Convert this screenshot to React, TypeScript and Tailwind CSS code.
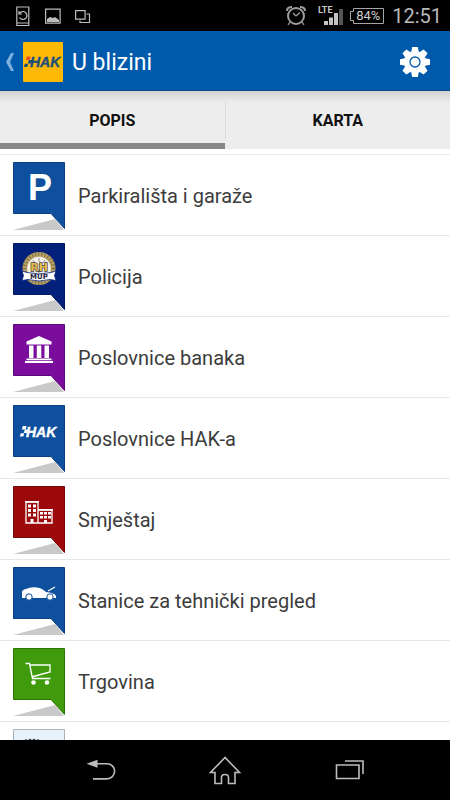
import type { ReactNode } from "react";

interface Place {
  name: string;
  fill: string;
  edge: string;
  art: ReactNode;
}

function HakMark({ x, y, color, accent }: { x: number; y: number; color: string; accent: string }) {
  return (
    <g transform={`translate(${x} ${y})`} fill={color}>
      <path d="M2.800 0h3.800l-1 3.400h-3.800z" fill={accent} />
      <path d="M4.800 3.600h3.500l-1 3.400h-3.500z" />
      <path d="M.8 7.200h3.500l-1 3.400h-3.500z" />
      <text
        x="6"
        y="10.500"
        fontFamily="Liberation Sans, Arial, sans-serif"
        fontSize="14"
        fontWeight="700"
        fontStyle="italic"
        stroke={color}
        strokeWidth=".4"
      >
        HAK
      </text>
    </g>
  );
}

const PLACES: Place[] = [
  {
    name: "Parkirališta i garaže",
    fill: "#0e509d",
    edge: "#0a3f80",
    art: (
      <text x="27" y="38" textAnchor="middle" fontFamily="Liberation Sans, Arial, sans-serif" fontSize="36" fontWeight="700" fill="#fff">
        P
      </text>
    ),
  },
  {
    name: "Policija",
    fill: "#02207a",
    edge: "#011860",
    art: (
      <g>
        <circle cx="26" cy="25.500" r="14" fill="#8f7c4a" stroke="#b7a266" strokeWidth="5" />
        <circle cx="26" cy="25.500" r="14.500" fill="none" stroke="#7d6c40" strokeWidth="4" strokeDasharray="1 2.200" />
        <circle cx="26" cy="25.500" r="11.800" fill="#f4f2ea" />
        <path d="M20 17l2 3M26 15v4M32 17l-2 3M26 27v3" stroke="#8b8b8b" />
        <path d="M9 28l5 1.500q12 3 24 0l5-1.500-1.500 4.500 1.500 5-6-1q-11 3-22 0l-6 1 1.500-5z" fill="#fff" stroke="#02207a" strokeWidth=".8" />
        <text
          x="26"
          y="28"
          textAnchor="middle"
          fontFamily="DejaVu Sans, sans-serif"
          fontSize="11"
          fontWeight="700"
          fill="#e9bd4c"
          stroke="#3b3a3a"
          strokeWidth="1.300"
          paintOrder="stroke"
        >
          RH
        </text>
        <text x="26" y="36" textAnchor="middle" fontFamily="DejaVu Sans, sans-serif" fontSize="7" fontWeight="700" fill="#1d2340">
          MUP
        </text>
      </g>
    ),
  },
  {
    name: "Poslovnice banaka",
    fill: "#7a0d9c",
    edge: "#5d0879",
    art: (
      <g fill="#fff">
        <path d="M26 12l12.500 5.500v3h-25v-3z" />
        <path d="M16 21.500h4.500v12.500h-4.500zM23.800 21.500h4.500v12.500h-4.500zM31.500 21.500h4.500v12.500h-4.500z" />
        <path d="M13.500 34.500h25v1.800h-25zM12 37h28v2h-28z" />
      </g>
    ),
  },
  {
    name: "Poslovnice HAK-a",
    fill: "#0e509d",
    edge: "#0a3f80",
    art: <HakMark x={7} y={21} color="#fff" accent="#fff" />,
  },
  {
    name: "Smještaj",
    fill: "#9c0a0c",
    edge: "#740506",
    art: (
      <g>
        <path d="M13 16h12v21h-12zM25 24h14v13h-14z" fill="none" stroke="#fff" strokeWidth="1.300" />
        <path d="M12 15h14v1.500h-14zM25 23h15v1.500h-15z" fill="#fff" />
        <path
          d="M15 18.500h3v3h-3zM20 18.500h3v3h-3zM15 23h3v3h-3zM20 23h3v3h-3zM15 27.500h3v3h-3zM20 27.500h3v3h-3zM27 26h3v2.500h-3zM31 26h3v2.500h-3zM35 26h3v2.500h-3zM27 30h3v2.500h-3zM31 30h3v2.500h-3zM35 30h3v2.500h-3zM17.500 33h3v4h-3zM31 34h3v3h-3z"
          fill="#fff"
        />
      </g>
    ),
  },
  {
    name: "Stanice za tehnički pregled",
    fill: "#0e509d",
    edge: "#0a3f80",
    art: (
      <g>
        <path d="M9 31v-6q0-2 4-3 5-2.500 11-1.500 5 .5 9 4.500 5 0 9 2.500 1.500 1.500 1 3.500z" fill="#fff" />
        <path d="M35 24l7-4" stroke="#fff" strokeWidth="1.300" />
        <g fill="#fff" stroke="#0e509d" strokeWidth="1">
          <circle cx="16" cy="30" r="3.200" />
          <circle cx="37" cy="30" r="3.200" />
        </g>
      </g>
    ),
  },
  {
    name: "Trgovina",
    fill: "#3f9b0b",
    edge: "#2d7605",
    art: (
      <g>
        <path d="M12.500 15.500h4l3 15h18M17 17h20v7l-18.500 5" fill="none" stroke="#fff" strokeWidth="1.300" />
        <g fill="#fff">
          <circle cx="20.500" cy="34.500" r="2.300" />
          <circle cx="34" cy="34.500" r="2.300" />
        </g>
      </g>
    ),
  },
];

function Pin({ fill, edge, children }: { fill: string; edge: string; children?: ReactNode }) {
  return (
    <svg width="52" height="68" viewBox="0 0 52 68" className="shrink-0" aria-hidden="true">
      <path d="M0 68L42 57l9 11z" fill="#c9c9c9" />
      <path d="M.5.5h51v66L38 51.500H.5z" fill={fill} stroke={edge} />
      {children}
    </svg>
  );
}

function StatusBar() {
  return (
    <div className="flex h-[31px] shrink-0 items-center bg-black px-4 text-[#b9b9b9]">
      <svg width="76" height="22" viewBox="0 0 76 22" fill="none" stroke="#bdbdbd" strokeWidth="1.200" aria-hidden="true">
        <path d="M.8 2h12v18.500h-12zM.8 18h12" />
        <path d="M3.500 8.500a4 4 0 1 1 0 4M3 6v3h3" />
        <path d="M29.600 4.200h14.500v14h-14.500z" />
        <path d="M31 17v-3l3-2 3 1 2-1 4 3v2z" fill="#bdbdbd" stroke="none" />
        <path d="M59.600 5.600h9.500v8.500h-9.500zM70.500 9h3v8.500h-9.500v-2" />
      </svg>
      <div className="ml-auto flex items-center">
        <svg width="20" height="22" viewBox="0 0 20 22" fill="none" stroke="#9d9d9d" aria-hidden="true">
          <circle cx="10" cy="11" r="8" strokeWidth="2" />
          <path d="M10 11l-3-3M10 11l4-3.500M4 17l-2 3M16 17l2 3" strokeWidth="1.300" />
          <path d="M1 6q0-4 5-4M19 6q0-4-5-4" strokeWidth="2" />
        </svg>
        <svg width="28" height="24" viewBox="0 0 28 24" className="ml-2.5" aria-label="LTE">
          <text x="2" y="9" fontFamily="Roboto, sans-serif" fontSize="9" fontWeight="700" fill="#c8c8c8">
            LTE
          </text>
          <path d="M8 17h4v4h-4zM13 13.500h4v7.500h-4zM18 9h4v12h-4z" fill="#c4c4c4" />
          <path d="M23 5h4v16h-4z" fill="#555" />
        </svg>
        <div className="relative ml-1.5">
          <svg width="34" height="18" viewBox="0 0 34 18" fill="none" stroke="#a5a5a5" aria-hidden="true">
            <path d="M3.500 1.500h30v15h-30v-3h-3v-9h3z" />
          </svg>
          <span className="absolute inset-0 pl-1.5 text-[13px] leading-[18px] text-[#cfcfcf]">84%</span>
        </div>
        <span className="-mr-2 ml-2 text-xl leading-none">12:51</span>
      </div>
    </div>
  );
}

function Gear() {
  return (
    <svg width="32" height="32" viewBox="-16 -16 32 32" aria-hidden="true">
      <g fill="#fff">
        <circle r="11" />
        {[0, 45, 90, 135, 180, 225, 270, 315].map((angle) => (
          <path key={angle} d="M-4-9l1.200-6h5.600l1.200 6z" transform={`rotate(${angle})`} />
        ))}
      </g>
      <circle r="5" fill="none" stroke="#005aac" strokeWidth="1.300" />
    </svg>
  );
}

function ActionBar() {
  return (
    <header className="flex h-[60px] shrink-0 items-center border-b border-[#0a4c90] bg-[#005aac] pt-0.5 pr-[19px] text-white">
      <button type="button" aria-label="Natrag" className="flex items-center pl-1.5">
        <svg width="9" height="18" viewBox="0 0 9 18" fill="#7db0e0" aria-hidden="true">
          <path d="M5 0h3L4 9l4 9H5L0 9z" />
        </svg>
        <svg width="40" height="40" viewBox="0 0 40 40" className="ml-2" aria-hidden="true">
          <rect width="40" height="40" rx="1" fill="#fdb906" />
          <HakMark x={1} y={14.500} color="#1c4f7c" accent="#e6501e" />
        </svg>
      </button>
      <h1 className="ml-[9px] pt-1 text-[23px]">U blizini</h1>
      <button type="button" aria-label="Postavke" className="ml-auto">
        <Gear />
      </button>
    </header>
  );
}

function Tabs() {
  return (
    <div role="tablist" className="flex h-[58px] shrink-0 bg-linear-to-b from-[#d2d2d2] to-[#ededed] to-20% text-base font-bold text-[#111]">
      <button type="button" role="tab" aria-selected="true" className="flex-1 border-b-6 border-[#888] pt-2">
        POPIS
      </button>
      <div className="my-2.5 w-px bg-[#dadada]" />
      <button type="button" role="tab" aria-selected="false" className="flex-1 border-b-6 border-transparent pt-2">
        KARTA
      </button>
    </div>
  );
}

function NavBar() {
  return (
    <nav className="flex h-[60px] shrink-0 items-center justify-between bg-black px-[84px]">
      <button type="button" aria-label="Back">
        <svg width="32" height="32" viewBox="0 0 32 32" fill="none" stroke="#bdbdbd" strokeWidth="1.600" aria-hidden="true">
          <path d="M12 9.700h11a7.600 7.600 0 0 1 0 15.200H9" />
          <path d="M2.500 9.700l11-4v8z" fill="#bdbdbd" stroke="none" />
        </svg>
      </button>
      <button type="button" aria-label="Home">
        <svg width="34" height="32" viewBox="0 0 34 32" fill="none" stroke="#bdbdbd" strokeWidth="1.600" aria-hidden="true">
          <path d="M17 3.500L2.500 18.500h4.500v11h6.500v-6q0-3 3.500-3t3.500 3v6h6.500v-11h4.500z" />
        </svg>
      </button>
      <button type="button" aria-label="Recent apps">
        <svg width="32" height="32" viewBox="0 0 32 32" fill="none" stroke="#bdbdbd" strokeWidth="1.600" aria-hidden="true">
          <path d="M2.500 11h22.500v13.500h-22.500zM11 7h18v13" />
        </svg>
      </button>
    </nav>
  );
}

export default function App() {
  return (
    <div className="flex h-screen flex-col bg-white font-[Roboto,sans-serif]">
      <StatusBar />
      <ActionBar />
      <Tabs />
      <ul className="mt-[5px] min-h-0 flex-1 overflow-y-auto border-t border-[#ebebeb] [scrollbar-width:none]">
        {PLACES.map((place) => (
          <li key={place.name} className="border-b border-[#e6e6e6]">
            <button type="button" className="flex h-20 w-full items-center gap-[13px] px-[13px] pt-px text-left text-xl text-[#3c3c3c]">
              <Pin fill={place.fill} edge={place.edge}>
                {place.art}
              </Pin>
              {place.name}
            </button>
          </li>
        ))}
        <li className="flex h-20 items-center px-[13px] pt-px">
          <Pin fill="#e6f1fa" edge="#a9b1b8">
            <path d="M12 10l3 1 2-1.500 2 1.500 2-1.500 2 1.500 3-1v12h-14z" fill="#3f4a55" />
          </Pin>
        </li>
      </ul>
      <NavBar />
    </div>
  );
}
